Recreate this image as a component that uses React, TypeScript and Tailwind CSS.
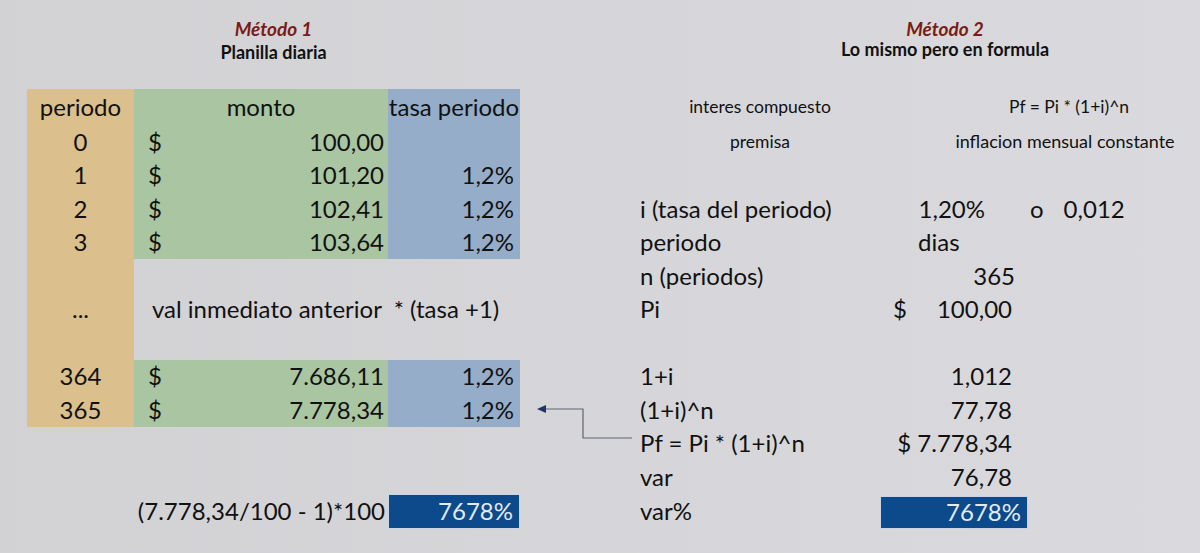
export default function App() {
  const cell = "flex items-center text-[24px] leading-none whitespace-nowrap"
  const tan = "bg-[#dbbf8d]"
  const green = "bg-[#aac5a1]"
  const blue = "bg-[#95adc9]"

  return (
    <div className="w-[1200px] h-[553px] overflow-hidden bg-linear-to-r from-[#d2d2d5] to-[#dadade] font-['Lato',sans-serif] text-[#111111]">
      {/* titles */}
      <div className="flex pt-[18px]">
        <div className="ml-[27px] w-[493px] flex flex-col items-center">
          <div className="text-[19px] leading-[22px] font-bold italic text-[#7c1c15]">Método 1</div>
          <div className="mt-[1px] text-[18px] leading-[22px] font-bold">Planilla diaria</div>
        </div>
        <div className="ml-[170px] w-[510px] flex flex-col items-center">
          <div className="text-[19px] leading-[22px] font-bold italic text-[#7c1c15]">Método 2</div>
          <div className="-mt-[2px] text-[18px] leading-[22px] font-bold">Lo mismo pero en formula</div>
        </div>
      </div>

      <div className="mt-[26px] ml-[27px] grid grid-cols-[107px_254px_132px_120px_240px_148px_172px] grid-rows-[36px_repeat(11,33.5px)]">
        {/* header row */}
        <div className={`${cell} ${tan} col-start-1 row-start-1 justify-center`}>periodo</div>
        <div className={`${cell} ${green} col-start-2 row-start-1 justify-center`}>monto</div>
        <div className={`${cell} ${blue} col-start-3 row-start-1 justify-center`}>tasa periodo</div>
        <div className="col-start-5 row-start-1 flex items-center justify-center text-[17.5px]">interes compuesto</div>
        <div className="col-start-6 col-span-2 row-start-1 flex items-center justify-center pl-[58px] text-[17.5px] whitespace-nowrap">Pf = Pi * (1+i)^n</div>

        {/* rows 0-3 */}
        {[
          ["0", "100,00", ""],
          ["1", "101,20", "1,2%"],
          ["2", "102,41", "1,2%"],
          ["3", "103,64", "1,2%"],
        ].map((r, i) => (
          <div key={r[0]} className="contents">
            <div className={`${cell} ${tan} col-start-1 justify-center`} style={{ gridRowStart: i + 2 }}>{r[0]}</div>
            <div className={`${cell} ${green} col-start-2 justify-between pl-[14px] pr-[4px]`} style={{ gridRowStart: i + 2 }}>
              <span>$</span>
              <span>{r[1]}</span>
            </div>
            <div className={`${cell} ${blue} col-start-3 justify-end pr-[6px]`} style={{ gridRowStart: i + 2 }}>{r[2]}</div>
          </div>
        ))}
        <div className="col-start-5 row-start-2 flex items-center justify-center text-[17.5px]">premisa</div>
        <div className="col-start-6 col-span-2 row-start-2 flex items-center justify-center pl-[50px] text-[18px] whitespace-nowrap">inflacion mensual constante</div>

        {/* gap rows */}
        <div className={`${tan} col-start-1 row-start-6`} />
        <div className={`${cell} ${tan} col-start-1 row-start-7 justify-center text-[16px]`}>...</div>
        <div className={`${cell} col-start-2 col-span-2 row-start-7 pl-[18px] whitespace-pre`}>val inmediato anterior  * (tasa +1)</div>
        <div className={`${tan} col-start-1 row-start-8`} />

        {/* rows 364-365 */}
        <div className={`${cell} ${tan} col-start-1 row-start-9 justify-center`}>364</div>
        <div className={`${cell} ${green} col-start-2 row-start-9 justify-between pl-[14px] pr-[4px]`}>
          <span>$</span>
          <span>7.686,11</span>
        </div>
        <div className={`${cell} ${blue} col-start-3 row-start-9 justify-end pr-[6px]`}>1,2%</div>
        <div className={`${cell} ${tan} col-start-1 row-start-10 justify-center`}>365</div>
        <div className={`${cell} ${green} col-start-2 row-start-10 justify-between pl-[14px] pr-[4px]`}>
          <span>$</span>
          <span>7.778,34</span>
        </div>
        <div className={`${cell} ${blue} col-start-3 row-start-10 justify-end pr-[6px]`}>1,2%</div>

        {/* arrow */}
        <div className="col-start-4 row-start-10 row-span-2">
          <svg width="120" height="67" viewBox="0 0 120 67">
            <path d="M112 45 H63 V16 H24" fill="none" stroke="#5f6470" strokeWidth="1.2" />
            <path d="M17 16 L26 12 L26 20 Z" fill="#1f3560" />
          </svg>
        </div>

        {/* formula block */}
        <div className={`${cell} col-start-5 row-start-4`}>i (tasa del periodo)</div>
        <div className={`${cell} col-start-6 row-start-4 justify-end pr-[43px]`}>1,20%</div>
        <div className={`${cell} col-start-7 row-start-4 pl-[2px] gap-[20px]`}>
          <span>o</span>
          <span>0,012</span>
        </div>
        <div className={`${cell} col-start-5 row-start-5`}>periodo</div>
        <div className={`${cell} col-start-6 row-start-5 pl-[38px]`}>dias</div>
        <div className={`${cell} col-start-5 row-start-6`}>n (periodos)</div>
        <div className={`${cell} col-start-6 row-start-6 justify-end pr-[13px]`}>365</div>
        <div className={`${cell} col-start-5 row-start-7`}>Pi</div>
        <div className={`${cell} col-start-6 row-start-7 justify-between pl-[13px] pr-[16px]`}>
          <span>$</span>
          <span>100,00</span>
        </div>
        <div className={`${cell} col-start-5 row-start-9`}>1+i</div>
        <div className={`${cell} col-start-6 row-start-9 justify-end pr-[16px]`}>1,012</div>
        <div className={`${cell} col-start-5 row-start-10`}>(1+i)^n</div>
        <div className={`${cell} col-start-6 row-start-10 justify-end pr-[16px]`}>77,78</div>
        <div className={`${cell} col-start-5 row-start-11`}>Pf = Pi * (1+i)^n</div>
        <div className={`${cell} col-start-6 row-start-11 justify-end pr-[16px] whitespace-pre`}>$ 7.778,34</div>
        <div className={`${cell} col-start-5 row-start-12`}>var</div>
        <div className={`${cell} col-start-6 row-start-12 justify-end pr-[16px]`}>76,78</div>

        {/* bottom row */}
        <div className={`${cell} col-start-1 col-span-2 row-start-13 justify-end pr-[3px]`}>(7.778,34/100 - 1)*100</div>
        <div className="col-start-3 row-start-13 flex items-center">
          <div className="w-full h-[35px] flex items-center justify-end pr-[6px] bg-[#0c4a8b] border border-[#c9d5e6] text-[24px] leading-none text-[#e4ebf5]">7678%</div>
        </div>
        <div className={`${cell} col-start-5 row-start-13`}>var%</div>
        <div className="col-start-6 row-start-13 flex items-end">
          <div className="w-full h-[33px] flex items-center justify-end pr-[6px] bg-[#0c4a8b] border border-[#c9d5e6] text-[24px] leading-none text-[#e4ebf5]">7678%</div>
        </div>
      </div>
    </div>
  )
}
